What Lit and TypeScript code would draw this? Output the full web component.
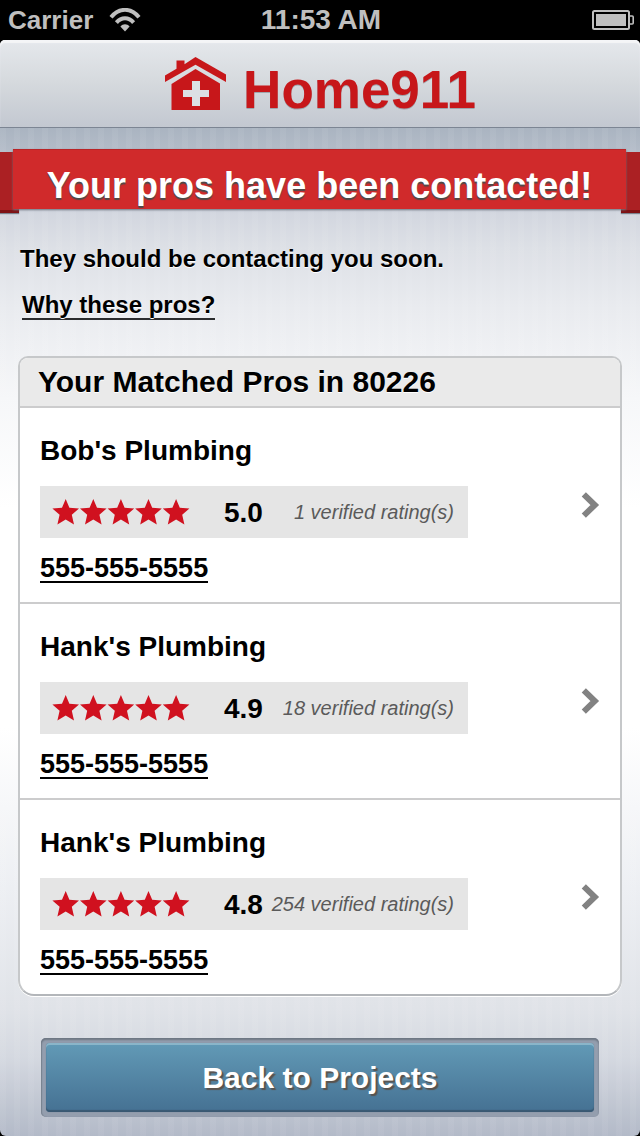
import { LitElement, html, css, svg } from "lit";
import { customElement, property } from "lit/decorators.js";

interface Pro {
  name: string;
  score: string;
  ratings: number;
  phone: string;
}

const PROS: Pro[] = [
  { name: "Bob's Plumbing", score: "5.0", ratings: 1, phone: "555-555-5555" },
  { name: "Hank's Plumbing", score: "4.9", ratings: 18, phone: "555-555-5555" },
  { name: "Hank's Plumbing", score: "4.8", ratings: 254, phone: "555-555-5555" },
];

@customElement("status-bar")
class StatusBar extends LitElement {
  static styles = css`
    :host {
      display: grid;
      grid-template-columns: 1fr auto 1fr;
      align-items: center;
      height: 40px;
      padding: 0 6px 0 8px;
      background: #000;
      color: #bfbfbf;
      font-weight: bold;
    }
    .carrier {
      display: flex;
      align-items: center;
      gap: 16px;
      font-size: 26px;
    }
    .time {
      font-size: 28px;
    }
    .battery {
      justify-self: end;
    }
    svg {
      display: block;
    }
  `;
  render() {
    return html`
      <div class="carrier">
        <span>Carrier</span>
        <svg width="32" height="24" viewBox="0 0 32 24" fill="none" stroke="#bfbfbf" stroke-width="4">
          <path d="M2 9.2C10-.6 22-.6 30 9.2" />
          <path d="M7.4 14.6C12.4 8.8 19.6 8.8 24.6 14.6" />
          <path d="M11.4 18.6C14 15.6 18 15.6 20.6 18.6L16 23.4Z" fill="#bfbfbf" stroke="none" />
        </svg>
      </div>
      <span class="time">11:53 AM</span>
      <svg class="battery" width="42" height="20" viewBox="0 0 42 20">
        <rect x="1" y="1" width="36" height="18" rx="1.5" fill="none" stroke="#bfbfbf" stroke-width="2" />
        <rect x="4" y="4" width="30" height="12" fill="#bfbfbf" />
        <path d="M38 6h2.200q1 0 1 1v6q0 1-1 1H38" fill="none" stroke="#bfbfbf" stroke-width="1.600" />
      </svg>
    `;
  }
}

@customElement("brand-header")
class BrandHeader extends LitElement {
  static styles = css`
    :host {
      display: block;
      background: #000;
    }
    .bar {
      display: flex;
      align-items: center;
      justify-content: center;
      gap: 15px;
      box-sizing: border-box;
      height: 88px;
      padding-top: 6px;
      border-bottom: 1px solid #7c8593;
      border-radius: 5px 5px 0 0;
      background: linear-gradient(#e5e8ec, #d5d9dd 50%, #c3c8d1);
      box-shadow: inset 0 3px 1px #f4f5f7;
    }
    svg {
      display: block;
      margin-bottom: 6px;
    }
    .name {
      color: #c7171a;
      font-size: 53px;
      font-weight: bold;
      line-height: 54px;
      padding-top: 6px;
      text-shadow: 0 1px 0 #9fa5ac;
    }
  `;
  render() {
    return html`
      <header class="bar">
        <svg width="64" height="56" viewBox="0 0 64 56" fill="#c7171a">
          <path d="M1 19.500L12.500 12.800V4.500H20.500V8.200L31.500 1L62 18.500V26L31.500 8.800L1 26Z" />
          <path d="M31.500 13L56 27.500V54H7.500V28Z" />
          <path d="M28 25h8v9h9v7h-9v9h-8v-9h-9v-7h9z" fill="#dce0e4" />
        </svg>
        <span class="name">Home911</span>
      </header>
    `;
  }
}

@customElement("ribbon-title")
class RibbonTitle extends LitElement {
  static styles = css`
    :host {
      display: block;
      position: relative;
      padding: 0 14px 0 13px;
    }
    .tail {
      position: absolute;
      top: 3px;
      bottom: -4px;
      width: 19px;
      background: linear-gradient(#ab2023 58px, #7f1215 58px);
      box-shadow: 0 1px 1px #7b838e;
    }
    .left {
      left: 0;
    }
    .right {
      right: 0;
    }
    .title {
      position: relative;
      margin: 0;
      padding: 12px 0 0;
      background: #d02a2b;
      border-top: 1px solid #b92427;
      box-shadow: 0 1px 2px #69727c;
      color: #fff;
      font-size: 36px;
      line-height: 47px;
      font-weight: bold;
      text-align: center;
      text-shadow: 0 2px 1px #4d4a49;
      white-space: nowrap;
    }
  `;
  render() {
    return html`
      <span class="tail left"></span><span class="tail right"></span>
      <h1 class="title"><slot></slot></h1>
    `;
  }
}

@customElement("pro-row")
class ProRow extends LitElement {
  @property({ attribute: false }) pro!: Pro;

  static styles = css`
    :host {
      display: flex;
      align-items: center;
      padding: 0 20px;
    }
    .info {
      flex: 1;
      display: flex;
      flex-direction: column;
      align-items: flex-start;
      padding: 27px 0 19px;
    }
    .name {
      margin: 0;
      font-size: 28px;
      line-height: 32px;
      font-weight: bold;
    }
    .rating {
      display: flex;
      align-items: center;
      box-sizing: border-box;
      width: 100%;
      max-width: 428px;
      height: 52px;
      margin: 19px 0 16px;
      padding: 0 14px 0 12px;
      background: #e5e5e5;
    }
    .score {
      margin-left: 34px;
      font-size: 28px;
      line-height: 32px;
      padding-top: 2px;
      font-weight: bold;
    }
    .count {
      flex: 1;
      text-align: right;
      color: #5a5a5a;
      font-size: 20px;
      font-style: italic;
      white-space: nowrap;
    }
    .phone {
      color: #000;
      font-size: 27px;
      line-height: 29px;
      font-weight: bold;
      text-decoration: none;
      border-bottom: 2px solid #000;
      height: 27px;
    }
    .more {
      padding: 0;
      border: 0;
      background: none;
    }
    svg {
      display: block;
    }
  `;
  render() {
    const p = this.pro;
    return html`
      <div class="info">
        <h3 class="name">${p.name}</h3>
        <div class="rating">
          <svg width="138" height="28" viewBox="0 0 138 28" fill="#d0111f" role="img" aria-label="5 stars">
            ${[0, 1, 2, 3, 4].map(
              (i) => svg`<path transform=${`translate(${i * 27.6} 0)`}
                d="M13.700 1L17.400 9.700L27 10.500L19.800 16.800L22 26.500L13.700 21.400L5.400 26.500L7.600 16.800L.4 10.500L10 9.700Z" />`
            )}
          </svg>
          <span class="score">${p.score}</span>
          <span class="count">${p.ratings} verified rating(s)</span>
        </div>
        <a class="phone" href="tel:${p.phone}">${p.phone}</a>
      </div>
      <button class="more" aria-label="Details for ${p.name}">
        <svg width="20" height="28" viewBox="0 0 20 28" fill="none" stroke="#828282" stroke-width="6">
          <path d="M3.800 3.300L14.800 14L3.800 24.700" />
        </svg>
      </button>
    `;
  }
}

@customElement("app-root")
class AppRoot extends LitElement {
  static styles = css`
    :host {
      display: flex;
      flex-direction: column;
      min-height: 100vh;
      background: #000;
      color: #000;
      font-family: "Helvetica Neue", "Liberation Sans", Arial, sans-serif;
    }
    .page {
      flex: 1;
      display: flex;
      flex-direction: column;
      padding: 21px 0 19px;
      border-radius: 0 0 6px 6px;
      background:
        repeating-linear-gradient(90deg, rgba(255, 255, 255, 0.05) 0 6px, rgba(255, 255, 255, 0) 6px 14px),
        linear-gradient(#aab4c1 0, #b2bbc7 20px, #d2d6df 85px, #dde0e6 120px, #e9ebef 180px, #f6f7f9 270px,
          #fff 380px, #fff 600px, #edeff3 760px, #e0e3e8 880px, #d4d8e0 930px, #b3bac8 1008px);
    }
    .intro {
      display: flex;
      flex-direction: column;
      align-items: flex-start;
      gap: 18px;
      padding: 36px 20px 36px;
      font-size: 24px;
      line-height: 28px;
      font-weight: bold;
      text-shadow: 0 1px 0 #fff;
    }
    .text {
      margin: 0;
    }
    .why {
      margin-left: 2px;
      color: #000;
      text-decoration: none;
      border-bottom: 2px solid #2b2c2e;
      height: 27px;
    }
    .card {
      margin: 0 18px;
      border: 2px solid #c6c8ca;
      border-bottom-color: #b3b6ba;
      border-radius: 10px 10px 16px 16px;
      background: #fff;
      box-shadow: 0 1px 0 #fff;
      overflow: hidden;
    }
    .heading {
      margin: 0;
      padding: 0 18px;
      background: #eaeaea;
      font-size: 30px;
      line-height: 48px;
      font-weight: bold;
      text-shadow: 0 1px 0 #fff;
    }
    .list {
      margin: 0;
      padding: 0;
      list-style: none;
    }
    .item {
      border-top: 2px solid #cccccd;
    }
    .back {
      margin: 42px 41px 0;
      padding: 5px;
      border: 0;
      border-radius: 5px;
      background: #949eae;
      box-shadow: inset 0 2px 2px #6d7682, inset 1px 0 1px #7d8795;
      font: bold 30px/69px "Helvetica Neue", "Liberation Sans", Arial, sans-serif;
      color: #fff;
      text-shadow: 2px 2px 1px #59534e;
    }
    .face {
      display: block;
      border-radius: 4px;
      background: linear-gradient(#629ab6, #457193);
      box-shadow: inset 0 2px 0 #8ab5c9, inset 0 -2px 1px #395872, 0 0 1px #68788c;
    }
  `;
  render() {
    return html`
      <status-bar></status-bar>
      <brand-header></brand-header>
      <main class="page">
        <ribbon-title>Your pros have been contacted!</ribbon-title>
        <div class="intro">
          <p class="text">They should be contacting you soon.</p>
          <a class="why" href="#why">Why these pros?</a>
        </div>
        <section class="card">
          <h2 class="heading">Your Matched Pros in 80226</h2>
          <ul class="list">
            ${PROS.map((p) => html`<li class="item"><pro-row .pro=${p}></pro-row></li>`)}
          </ul>
        </section>
        <button class="back"><span class="face">Back to Projects</span></button>
      </main>
    `;
  }
}
